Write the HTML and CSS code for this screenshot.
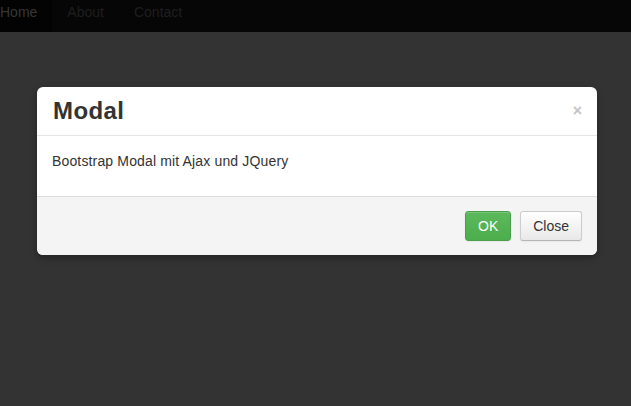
FILE: index.html
```html
<!DOCTYPE html>
<html lang="de">
<head>
    <meta charset="UTF-8">
    <meta name="viewport" content="width=device-width, initial-scale=1.0">
    <title>Bootstrap Modal</title>
    <link rel="stylesheet" href="styles.css">
</head>
<body>
    <nav class="navbar">
        <ul class="nav">
            <li class="active"><a href="#">Home</a></li>
            <li><a href="#">About</a></li>
            <li><a href="#">Contact</a></li>
        </ul>
    </nav>
    <main class="backdrop">
        <div class="modal">
            <div class="modal-header">
                <h3>Modal</h3>
                <button type="button" class="close">&times;</button>
            </div>
            <div class="modal-body">
                <p>Bootstrap Modal mit Ajax und JQuery</p>
            </div>
            <div class="modal-footer">
                <button type="button" class="btn btn-success">OK</button>
                <button type="button" class="btn">Close</button>
            </div>
        </div>
    </main>
</body>
</html>
```

FILE: styles.css
```css
html, body {
    height: 100%;
}
body {
    font-family: 'Liberation Sans', Arial, sans-serif;
    font-size: 14px;
    color: #333;
    background-color: #333;
    margin: 0;
    display: flex;
    flex-direction: column;
}
.navbar {
    background-color: #060606;
    height: 32px;
    flex-shrink: 0;
}
.nav {
    list-style: none;
    margin: 0 0 0 -15px;
    padding: 0;
    display: flex;
    height: 100%;
}
.nav li {
    display: flex;
}
.nav a {
    display: block;
    padding: 4px 15px 0;
    font-size: 14px;
    line-height: 16px;
    color: #1f1f1f;
    text-decoration: none;
}
.nav .active a {
    background-color: #030303;
    color: #363636;
}
.backdrop {
    flex: 1;
    padding: 55px 0 0 37px;
}
.modal {
    width: 560px;
    background-color: #fff;
    border-radius: 6px;
    box-shadow: 0 3px 7px rgba(0,0,0,0.3);
    overflow: hidden;
}
.modal-header {
    height: 48px;
    padding: 0 15px 0 16px;
    border-bottom: 1px solid #e5e5e5;
    display: flex;
    align-items: center;
    justify-content: space-between;
}
.modal-header h3 {
    margin: 0;
    font-size: 24px;
    font-weight: bold;
    line-height: 30px;
    letter-spacing: 0.4px;
    color: #333;
}
.close {
    background: none;
    border: none;
    padding: 0;
    margin-top: 0;
    font-family: 'Liberation Sans', Arial, sans-serif;
    font-size: 16px;
    font-weight: bold;
    line-height: 20px;
    color: #c4c4c4;
    cursor: pointer;
}
.modal-body {
    height: 60px;
    padding: 0 15px;
    border-bottom: 1px solid #ddd;
}
.modal-body p {
    margin: 0;
    padding-top: 15px;
    font-size: 14px;
    line-height: 20px;
    letter-spacing: 0.15px;
}
.modal-footer {
    background-color: #f4f4f4;
    padding: 14px 15px;
    display: flex;
    justify-content: flex-end;
    gap: 9px;
}
.btn {
    font-family: 'Liberation Sans', Arial, sans-serif;
    font-size: 14px;
    height: 30px;
    padding: 0 12px;
    color: #333;
    background: linear-gradient(#ffffff, #e8e8e8);
    border: 1px solid #ccc;
    border-bottom-color: #b5b5b5;
    border-radius: 3px;
    box-shadow: inset 0 1px 0 rgba(255,255,255,0.2), 0 1px 2px rgba(0,0,0,0.05);
    cursor: pointer;
}
.btn-success {
    width: 46px;
    padding: 0;
    color: #fff;
    background: linear-gradient(#5cb85c, #4cae4c);
    border-color: #4a9e4a;
}
```
